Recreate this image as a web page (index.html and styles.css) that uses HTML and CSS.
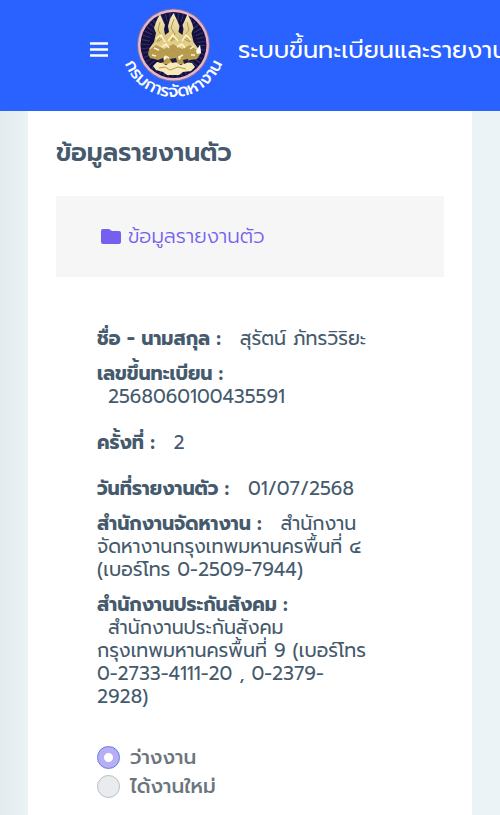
FILE: index.html
```html
<!DOCTYPE html>
<html lang="th">
<head>
<meta charset="utf-8">
<meta name="viewport" content="width=device-width, initial-scale=1">
<title>ข้อมูลรายงานตัว</title>
<link rel="stylesheet" href="styles.css">
</head>
<body>
<header class="topbar">
  <button class="menu" type="button" aria-label="เมนู">
    <svg width="18" height="16" viewBox="0 0 18 16"><path d="M0 1.500h18M0 7.500h18M0 13.500h18" stroke="#fff" stroke-width="2.600"/></svg>
  </button>
  <svg class="logo" width="106" height="100" viewBox="0 0 106 100">
    <defs>
      <path id="arc" d="M0.500 45A52 52 0 0 0 104.500 45"/>
      <linearGradient id="gold" x1="0" y1="0" x2="0" y2="1"><stop offset="0" stop-color="#f6edc4"/><stop offset=".6" stop-color="#dcc67e"/><stop offset="1" stop-color="#efe0a4"/></linearGradient>
    </defs>
    <circle cx="52.500" cy="45" r="36.500" fill="#77749f"/>
    <circle cx="52.500" cy="45" r="35.500" fill="#e9b3cb"/>
    <circle cx="52.500" cy="45" r="33" fill="#15113f"/>
    <circle cx="52.500" cy="45" r="28" fill="none" stroke="#35336c" stroke-width="8" stroke-dasharray="1 3"/>
    <path d="M52.500 13l3 6 3 7-1 6 4 3 1-6-1-4 2-4 3-7 4 8 2 6-2 5 2 9 5 7-5 6H32l-4-6 5-7 2-9-2-5 2-6 4-8 3 7 2 4-1 4 1 6 4-3-1-6 2-7z" fill="url(#gold)"/>
    <path d="M28 50l7-5 8 4 9-5 9 5 8-4 7 5 3-5 1 8-4 6-7 1-5 4H41l-4-4-8-2-2-4z" fill="#b79b4e"/>
    <path d="M32 66l4-4 5 1 4 2 7-4 8 4 5-3 6 1 3 4-4 4-8 1-4 3H46l-4-3-7-2z" fill="#f6eabb"/>
    <g fill="none" stroke="#b3984f" stroke-width="1">
      <path d="M39 22l-2 8 3 5-4 7 5-3M53 19l-3 9 4 6-4 7 5-3M66 22l2 8-4 5 5 7-6-3M32 51l6 2 4-4 5 5 6-5 5 5 5-5 5 4M38 68l6-1 5 3 8-3 8 2"/>
    </g>
    <g fill="none" stroke="#fff3c9" stroke-width="1.500">
      <path d="M35 39l5-4 4 7M47 41l5-6 5 6M61 41l4-6 5 5M33 48l5 2M41 47l4-3 3 4M56 47l5-3 3 4M69 49l4-3M31 55l4 1M44 56l4 2M58 57l4-2M70 55l4 0"/>
    </g>
    <g fill="#211b42"><path d="M37 60l5-2 1 4-4 1zM49 59l6-1 1 4-5 1zM62 60l5-1 1 3-5 2z"/></g>
    <path d="M43 56l3 2-3 2zM57 56l3 2-2 2zM75 51l4-6 1 8-4 1z" fill="#fff"/>
    <text class="logo-text" text-anchor="middle"><textPath href="#arc" startOffset="50%">กรมการจัดหางาน</textPath></text>
  </svg>
  <span class="brand">ระบบขึ้นทะเบียนและรายงานตัว</span>
</header>
<main class="page">
  <section class="card">
    <h1>ข้อมูลรายงานตัว</h1>
    <div class="tabs">
      <a class="tab" href="#info">
        <svg width="20" height="16" viewBox="0 0 20 16"><path d="M2 0h6l3 2h7q2 0 2 2v9q0 2-2 2H2q-2 0-2-2V2q0-2 2-2z" fill="#7460ee"/></svg>
        <span>ข้อมูลรายงานตัว</span>
      </a>
    </div>
    <div class="details" id="info">
      <p><b>ชื่อ - นามสกุล :</b><span class="value">สุรัตน์ ภัทรวิริยะ</span></p>
      <p><b>เลขขึ้นทะเบียน :</b><br><span class="value">2568060100435591</span></p>
      <p class="spaced"><b>ครั้งที่ :</b><span class="value">2</span></p>
      <p class="spaced"><b>วันที่รายงานตัว :</b><span class="value">01/07/2568</span></p>
      <p><b>สำนักงานจัดหางาน :</b><span class="value">สำนักงาน<br>จัดหางานกรุงเทพมหานครพื้นที่ ๔<br>(เบอร์โทร 0-2509-7944)</span></p>
      <p><b>สำนักงานประกันสังคม :</b><br><span class="value">สำนักงานประกันสังคม<br>กรุงเทพมหานครพื้นที่ 9 (เบอร์โทร<br>0-2733-4111-20 , 0-2379-<br>2928)</span></p>
      <div class="choices">
        <label><input type="radio" name="status" checked disabled>ว่างงาน</label>
        <label><input type="radio" name="status" disabled>ได้งานใหม่</label>
      </div>
    </div>
  </section>
</main>
</body>
</html>
```
FILE: styles.css
```css
* { box-sizing: border-box; }
body {
  margin: 0;
  min-height: 100vh;
  display: flex;
  flex-direction: column;
  overflow-x: hidden;
  background: #ebf3f7;
  color: #455a6c;
  font-family: Prompt, Kanit, "Noto Sans Thai", "Noto Sans", sans-serif;
  font-size: 20px;
  font-weight: 400;
  line-height: 23px;
}
.topbar {
  display: flex;
  align-items: center;
  height: 111px;
  padding: 0 0 12px 90px;
  overflow: hidden;
  background: #2962ff;
  color: #fff;
}
.menu { display: flex; padding: 0; border: 0; background: none; }
.logo { flex: none; margin: 0 11px 0 13px; overflow: visible; }
.logo-text { fill: #fff; font-size: 17px; font-weight: 500; }
.brand { flex: none; font-size: 24px; line-height: 36px; white-space: nowrap; }
.page {
  flex: 1;
  display: flex;
  padding: 0 28px;
  background: linear-gradient(90deg, #e4eaee, #ebf3f7 28px);
}
.card { flex: 1; min-width: 0; padding: 24px 28px 14px; background: #fff; }
h1 { margin: 0; font-size: 25px; line-height: 36px; font-weight: 600; }
.tabs { margin-top: 25px; padding: 24px 45px; background: #f6f6f6; }
.tab { display: flex; align-items: center; gap: 7px; color: #7460ee; font-weight: 300; line-height: 33px; text-decoration: none; }
.details { padding: 50px 41px 0; font-size: 19px; }
p { margin: 0 0 12px; white-space: nowrap; }
b { font-weight: 700; }
.value { margin-left: 19px; }
br + .value { margin-left: 11px; }
.spaced { margin: 23px 0; }
.spaced + .spaced { margin-bottom: 12px; }
.choices { padding-top: 23px; color: #6c757d; font-size: 20px; font-weight: 500; }
label { display: flex; align-items: center; gap: 10px; line-height: 29px; }
input {
  appearance: none;
  width: 23px;
  height: 23px;
  margin: 0;
  border: 1px solid #b9bec4;
  border-radius: 50%;
  background: #e9ecef;
}
input:checked { border-color: #5b7be6; background: radial-gradient(circle, #fff 4px, #b9aef5 5px); }
```
